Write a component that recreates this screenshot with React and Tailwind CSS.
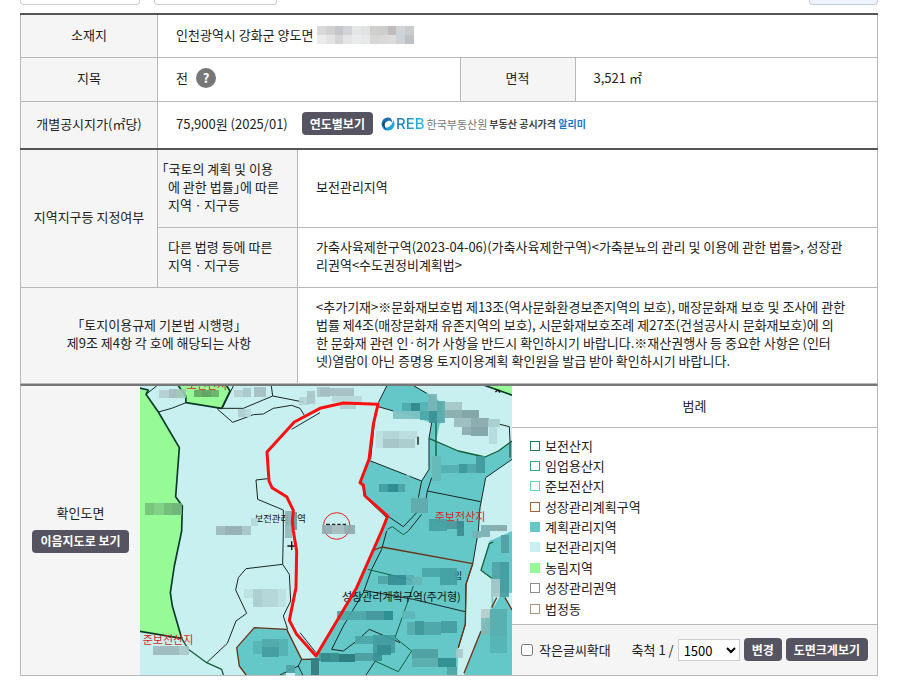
import React from "react";

const DARK_BUTTON =
  "h-[23px] rounded bg-[#565460] px-2 text-[12px] leading-[18px] font-bold text-white whitespace-nowrap";
const HEAD = "border border-[#b8b8b8] bg-[#f5f5f5] pb-0.5 font-normal";
const CELL = "border border-[#b8b8b8] bg-white px-[18px] pb-0.5 text-left";

const LEGEND = [
  ["보전산지", "border border-[#1f7a4d]"],
  ["임업용산지", "border border-[#35a877]"],
  ["준보전산지", "border border-[#5fd8a8]"],
  ["성장관리계획구역", "border border-[#a0633c]"],
  ["계획관리지역", "bg-[#64c8c8]"],
  ["보전관리지역", "bg-[#c8f0f0]"],
  ["농림지역", "bg-[#96fa96]"],
  ["성장관리권역", "border border-[#8c8c8c]"],
  ["법정동", "border border-[#a8977c]"],
];

const MASK = [
  ["#d9d9d9", "#d2d2d2", "#c5c7ca", "#d0d3d6", "#e4e6e8", "#e2e2e2", "#cfcfcb", "#cdcdcd", "#c1bbbb", "#ced4da", "#c9cbcd"],
  ["#ececec", "#e3e3e3", "#d5d5d8", "#e5e5e5", "#eaebec", "#e8e8e8", "#d6d6d4", "#d9d9dc", "#dcdcdc", "#cfd2d6", "#bfc2c5"],
];

function AddressMask() {
  return (
    <svg
      className="ml-1"
      width="97"
      height="18"
      viewBox="0 0 99 18"
      preserveAspectRatio="none"
      shapeRendering="crispEdges"
      aria-hidden="true"
    >
      {MASK.map((row, r) =>
        row.map((fill, c) => <rect key={`${r}-${c}`} x={c * 9} y={r * 9} width="9" height="9" fill={fill} />)
      )}
    </svg>
  );
}

function RebLogo() {
  return (
    <a href="#reb" className="flex items-center whitespace-nowrap">
      <svg width="14" height="14" viewBox="0 0 28 28" aria-hidden="true">
        <path d="M14 1A13 13 0 0 0 4 22C5 15 8 10 14 8C17 7 20 8 22 11C23 5 19 1 14 1Z" fill="#1d6fb0" />
        <path d="M24 6A13 13 0 0 1 12 27C6 27 3 23 3 19C7 22 13 22 17 19C21 16 24 11 24 6Z" fill="#1aa6d6" />
        <path d="M5 10C2 16 5 24 12 26C7 21 6 15 9 9Z" fill="#0b3f77" />
      </svg>
      <span className="ml-px bg-linear-to-r from-[#2377ae] to-[#1fc0ee] bg-clip-text font-[Inter,sans-serif] text-[15px] leading-[18px] font-medium text-transparent">
        REB
      </span>
      <span className="ml-0.5 text-[11px] leading-[18px] text-[#777]">한국부동산원</span>
      <span className="ml-0.5 text-[10px] leading-[18px] font-bold text-[#444]">
        부동산 공시가격 <span className="text-[#1677cf]">알리미</span>
      </span>
    </a>
  );
}

const MOSAIC = [
  // upper left
  [58, 12, 28, 25, "#b4cdd0"], [86, 10, 26, 25, "#a5b8bc"], [112, 10, 26, 27, "#9cc8b0"],
  [162, 12, 24, 22, "#64a864"], [186, 12, 26, 22, "#5c9c60"], [212, 12, 24, 22, "#67ad67"],
  [282, 12, 26, 22, "#b4d0d2"], [308, 6, 24, 28, "#aac6ca"], [342, 4, 36, 30, "#a4bcc0"],
  [476, 32, 30, 26, "#b4d4d6"], [500, 15, 26, 40, "#a8c4c8"], [530, 4, 40, 28, "#aac4c8"],
  [540, 6, 102, 24, "#a4bcc0"], [575, 30, 92, 18, "#b8d6d8"], [600, 48, 48, 20, "#b0cccc"],
  [294, 70, 20, 24, "#acccce"], [314, 68, 20, 26, "#b8d8da"],
  [15, 350, 28, 38, "#74c078"], [43, 350, 28, 38, "#80cc84"], [71, 350, 26, 38, "#72b878"], [97, 350, 30, 38, "#6cae78"],
  [334, 396, 20, 24, "#b4d8da"], [228, 420, 26, 27, "#9cb8bb"], [254, 420, 52, 27, "#91aab0"], [306, 420, 28, 27, "#a8c2c4"],
  [436, 376, 22, 44, "#8cb0b4"], [458, 378, 14, 54, "#69979c"], [434, 420, 22, 36, "#94b8ba"],
  // upper right
  [864, 25, 26, 50, "#78b4b4"], [786, 52, 26, 24, "#4fa9ab"], [812, 50, 28, 26, "#2f8489"], [840, 48, 24, 28, "#56b2b2"],
  [760, 76, 80, 24, "#7cc0c0"], [840, 76, 26, 26, "#4ba6a8"], [866, 76, 26, 36, "#398d91"], [892, 46, 24, 66, "#5aa8a8"],
  [916, 48, 50, 24, "#a4c4c4"], [916, 72, 50, 24, "#86a9aa"], [966, 72, 52, 24, "#7b9fa1"], [942, 96, 50, 26, "#9ababa"], [992, 96, 54, 28, "#87a5a8"],
  [966, 122, 26, 24, "#8ca9ac"], [992, 122, 52, 28, "#7d9da2"], [1044, 98, 36, 26, "#a8cccc"], [1048, 124, 24, 50, "#b4dada"],
  [708, 136, 22, 50, "#bce0e2"], [730, 134, 48, 26, "#b0d2d4"], [778, 136, 52, 24, "#b8dcde"], [730, 160, 48, 26, "#a2c1c4"], [778, 160, 48, 26, "#a9caca"],
  [876, 210, 26, 76, "#67b8b8"], [902, 236, 54, 24, "#55aeb0"], [956, 234, 26, 26, "#389699"], [982, 234, 26, 26, "#50a5a8"], [1008, 210, 26, 50, "#3e999c"],
  [717, 293, 28, 26, "#409c9e"], [745, 293, 28, 26, "#28878b"], [773, 293, 22, 26, "#4ba0a2"], [795, 268, 16, 24, "#72bcbc"],
  [812, 336, 52, 44, "#5faaad"], [868, 400, 54, 34, "#459fa1"], [922, 404, 50, 26, "#4c9799"], [950, 404, 22, 46, "#3b8d90"],
  [1022, 416, 28, 36, "#78adb0"], [1050, 416, 50, 18, "#82a6a9"],
  [545, 416, 32, 28, "#94aab0"], [577, 418, 34, 26, "#a6b9ba"], [611, 416, 34, 28, "#8eabae"],
  // lower left
  [313, 610, 26, 26, "#bcdfe0"], [339, 610, 28, 52, "#a8cbcc"], [367, 610, 46, 52, "#b3d4d6"], [413, 610, 26, 52, "#bce0e0"],
  [38, 780, 80, 26, "#9ab8bc"], [118, 780, 28, 26, "#a8c6c9"],
  [339, 766, 28, 38, "#58b4b4"], [367, 758, 50, 26, "#4fa6a8"], [367, 784, 50, 28, "#429b9f"], [417, 760, 28, 50, "#53b0b1"],
  [512, 817, 26, 50, "#33787b"], [538, 802, 32, 24, "#439396"], [438, 836, 28, 26, "#4fa3a5"],
  // lower right
  [997, 435, 26, 22, "#76b2b6"], [1082, 446, 24, 54, "#519fa2"], [1055, 528, 24, 52, "#50a4a5"], [1079, 528, 27, 106, "#429a9c"],
  [1053, 580, 26, 54, "#a7c7c8"], [1023, 670, 28, 26, "#b6cccb"], [1023, 696, 28, 52, "#80b8b8"], [1050, 670, 50, 80, "#57adae"], [1050, 750, 50, 50, "#54b4b5"],
  [715, 570, 28, 24, "#4da1a4"], [743, 568, 54, 28, "#338c91"], [797, 568, 24, 30, "#58afb0"],
  [845, 546, 54, 28, "#48a5a6"], [899, 546, 52, 50, "#439ea1"], [817, 572, 28, 26, "#64b6b8"],
  [590, 676, 88, 26, "#4ea5a6"], [678, 676, 54, 26, "#429599"], [732, 674, 26, 28, "#28898d"], [786, 674, 40, 26, "#5db6b8"],
  [800, 708, 24, 38, "#55abac"], [824, 706, 28, 40, "#3d9698"], [852, 708, 52, 40, "#4da4a6"], [904, 706, 46, 36, "#439ca0"],
  [646, 750, 54, 24, "#4ba5a7"], [700, 748, 66, 52, "#419a9d"], [712, 776, 40, 30, "#318d90"],
  [544, 802, 54, 26, "#36898b"], [598, 804, 48, 24, "#2a777b"], [646, 800, 52, 26, "#4d9c9f"], [698, 800, 28, 26, "#378e91"],
  [816, 790, 78, 26, "#4e9da0"], [816, 816, 78, 26, "#5aacac"], [894, 816, 54, 26, "#2e8b8c"], [920, 842, 30, 25, "#51a4a4"],
  [948, 790, 22, 26, "#a9c7c8"],
];

function ZoningMap() {
  return (
    <svg
      width="372"
      height="289"
      viewBox="0 0 1116 867"
      role="img"
      aria-label="확인도면"
      className="block overflow-visible font-['Noto_Sans_CJK_KR',sans-serif]"
    >
      <clipPath id="map-frame">
        <rect width="1116" height="867" />
      </clipPath>
      <g clipPath="url(#map-frame)" fill="none" strokeLinejoin="round">
        <rect width="1116" height="867" fill="#c8f0f0" />
        <g fill="#96fa96" stroke="#0c3a2a" strokeWidth="5">
          <path d="M-5 5L25 12L18 25L55 78L118 185L107 332L127 360L125 435L103 540L91 620L97 660L125 757L-5 735Z" />
          <path d="M112 -5L137 30L138 50L245 67L270 15L257 -5Z" />
          <path d="M1025 -5L1120 29V-5Z" />
        </g>
        <g fill="#64c8c8">
          <path d="M715 50L740 0H822L870 25L905 50L910 110L885 115L800 85L760 75L715 62Z" />
          <path d="M687 223L845 285L867 250V157L875 110H900L888 167L955 195L1035 213L1075 195L1116 165V220L1037 275L1020 365L1015 435L998 535L978 595L976 715L955 785L952 867H318L298 840L290 785L343 725L440 730L485 820L528 815L540 790L650 605L725 435L743 390L675 330L660 290Z" />
          <path d="M1048 465L1116 435V867H972L1023 735L1055 665V577L1023 553Z" />
          <path d="M1060 665L1080 630H1095L1116 670V665L1116 620H1060Z" fill="#c8f0f0" />
        </g>
        <g stroke="#1c2624" strokeWidth="3">
          <path d="M18 25L50 0M55 78L95 67L138 50M232 67H310L398 30L394 0M398 30L490 48M248 65L280 0" />
          <path d="M232 69L278 109L340 86L370 84L400 67L455 58L480 67L493 88" />
          <path d="M383 278L348 282L353 340L430 372V435L428 535L448 565L452 645L430 690L443 730" />
          <path d="M428 535L318 548L295 575L287 612L320 682L288 705L262 772L200 830" />
          <path d="M485 820L475 840L420 867M475 840L488 867" />
          <path d="M715 50L740 0M822 0L860 22M715 62L760 75M687 223L845 285L867 250V157L875 110M845 285L835 335M743 390L790 422L835 375" />
          <path d="M1080 115L1108 122L1110 165V215" />
          <path d="M862 315L1022 347M875 275L862 315L858 340M845 385L805 435" />
          <path d="M1116 220L1037 275L1020 365L1015 435L998 535L978 595L976 715L955 785" />
          <path d="M740 435L725 490L695 550L670 620L610 720L575 790L610 795L650 765L688 730L780 770" />
          <path d="M670 613L820 640L975 677M706 825L678 867M480 740L528 800" />
          <path d="M540 80L455 130M706 80L692 220M672 300V330L740 395" />
        </g>
        <g stroke="#116037" strokeWidth="4">
          <path d="M867 157L955 195L1035 213L1075 195L1116 165M888 110V210" />
          <path d="M125 757L145 790L200 830L245 850L250 867" />
          <path d="M742 430L757 422L790 446L804 436M683 550L815 582M820 600L765 755L815 795L775 857L705 825" strokeWidth="3" />
          <path d="M1060 468L1048 473L1023 553L1055 577" />
        </g>
        <g stroke="#6b3216" strokeWidth="4">
          <path d="M725 483L998 533L978 595L976 715L955 785M700 493L725 483" />
          <path d="M318 867L298 840L290 785L343 725L440 730L485 820H515" />
          <path d="M972 862L1023 735M1055 665L1070 635M1095 635L1116 672" />
        </g>
        <g fontSize="33">
          <text x="140" y="8" fill="#e01818">보전산지</text>
          <text x="344" y="408" fontSize="28" fill="#111">보전관리</text>
          <text x="472" y="408" fontSize="28" fill="#111">역</text>
          <text x="884" y="406" fill="#e01818">준보전산지</text>
          <text x="8" y="774" fill="#e01818">준보전산지</text>
          <text x="606" y="646" fill="#111">성장관리계획구역(주거형)</text>
          <text x="942" y="580" fontSize="26" fill="#111">임</text>
        </g>
        <path d="M834 152V176M442 480H466M455 466V492M1066 18L1074 12L1080 20" stroke="#111" strokeWidth="4" />
        <circle cx="590" cy="420" r="40" stroke="#e82020" strokeWidth="3" />
        <path d="M558 416H570M576 416H586M592 416H602M608 416H618" stroke="#222" strokeWidth="5" />
      </g>
      <g shapeRendering="crispEdges">
        {MOSAIC.map(([x, y, width, height, fill]) => (
          <rect key={`${x}-${y}`} x={x} y={y} width={width} height={height} fill={fill} opacity="0.9" />
        ))}
        <rect x="438" y="862" width="27" height="25" fill="#d4f0f0" />
      </g>
      <path
        d="M610 51L540 67L463 108L381 198L387 285L396 305L440 332L460 373L457 405L460 435L470 495L468 605L448 703L470 745L528 810L540 790L650 605L725 435L743 390L675 330L670 297L660 290L687 220L700 115L714 55Z"
        fill="none"
        stroke="#fa1010"
        strokeWidth="9"
        strokeLinejoin="round"
      />
    </svg>
  );
}

export default function App() {
  return (
    <div className="mr-[22px] ml-5 font-['Noto_Sans_CJK_KR',sans-serif] text-[13px] leading-[18px] text-[#222]">
      <div className="mb-2 flex gap-3.5">
        <button type="button" aria-label="이전" className="h-[5px] w-[120px] rounded-b border border-t-0 border-[#ccc]" />
        <button type="button" aria-label="다음" className="h-[5px] w-[123px] rounded-b border border-t-0 border-[#ccc]" />
        <button type="button" aria-label="인쇄" className="ml-auto h-[5px] w-[69px] rounded-b border border-t-0 border-[#c5ccd8] bg-[#eef4fd]" />
      </div>

      <table className="w-full table-fixed border-collapse border-t-2 border-b-2 border-[#555]">
        <colgroup>
          <col className="w-[137px]" />
          <col />
          <col className="w-[115px]" />
          <col />
        </colgroup>
        <tbody>
          <tr className="h-[43px]">
            <th scope="row" className={HEAD}>소재지</th>
            <td colSpan={3} className={CELL}>
              <div className="flex items-center">
                인천광역시 강화군 양도면
                <AddressMask />
              </div>
            </td>
          </tr>
          <tr className="h-11">
            <th scope="row" className={HEAD}>지목</th>
            <td className={CELL}>
              <div className="flex items-center gap-2">
                전
                <button type="button" className="size-5 rounded-full bg-[#777] text-[13px] leading-5 font-bold text-white">?</button>
              </div>
            </td>
            <th scope="row" className={HEAD}>면적</th>
            <td className={CELL}>3,521 ㎡</td>
          </tr>
          <tr className="h-12">
            <th scope="row" className={HEAD}>개별공시지가(㎡당)</th>
            <td colSpan={3} className={CELL}>
              <div className="flex items-center">
                75,900원 (2025/01)
                <button type="button" className={`${DARK_BUTTON} mr-2 ml-3.5`}>연도별보기</button>
                <RebLogo />
              </div>
            </td>
          </tr>
        </tbody>
      </table>

      <table className="w-full table-fixed border-collapse break-all">
        <colgroup>
          <col className="w-[137px]" />
          <col className="w-[140px]" />
          <col />
        </colgroup>
        <tbody>
          <tr className="h-[77px]">
            <th scope="rowgroup" rowSpan={2} className={`${HEAD} border-t-0`}>지역지구등 지정여부</th>
            <th
              scope="row"
              className={`${HEAD} border-t-0 pr-2 pl-[10px] text-left -indent-1.5 [font-feature-settings:'halt']`}
            >
              「국토의 계획 및 이용
              <br />
              에 관한 법률」에 따른
              <br />
              지역ㆍ지구등
            </th>
            <td className={`${CELL} border-t-0`}>보전관리지역</td>
          </tr>
          <tr className="h-[60px]">
            <th scope="row" className={`${HEAD} pr-2 pl-[10px] text-left`}>
              다른 법령 등에 따른
              <br />
              지역ㆍ지구등
            </th>
            <td className={CELL}>
              가축사육제한구역(2023-04-06)(가축사육제한구역)&lt;가축분뇨의 관리 및 이용에 관한 법률&gt;, 성장관
              <br />
              리권역&lt;수도권정비계획법&gt;
            </td>
          </tr>
          <tr className="h-24">
            <th scope="row" colSpan={2} className={HEAD}>
              「토지이용규제 기본법 시행령」
              <br />
              제9조 제4항 각 호에 해당되는 사항
            </th>
            <td className={CELL}>
              &lt;추가기재&gt;※문화재보호법 제13조(역사문화환경보존지역의 보호), 매장문화재 보호 및 조사에 관한
              <br />
              법률 제4조(매장문화재 유존지역의 보호), 시문화재보호조례 제27조(건설공사시 문화재보호)에 의
              <br />
              한 문화재 관련 인·허가 사항을 반드시 확인하시기 바랍니다.※재산권행사 등 중요한 사항은 (인터
              <br />
              넷)열람이 아닌 증명용 토지이용계획 확인원을 발급 받아 확인하시기 바랍니다.
            </td>
          </tr>
        </tbody>
      </table>

      <section className="flex border border-t-2 border-[#b8b8b8] border-t-[#777]">
        <div className="flex w-[119px] shrink-0 flex-col items-center justify-center gap-2 bg-[#f5f5f5] pb-1">
          <h2>확인도면</h2>
          <button type="button" className={DARK_BUTTON}>이음지도로 보기</button>
        </div>
        <div className="shrink-0">
          <ZoningMap />
        </div>
        <div className="flex min-w-0 grow flex-col">
          <h2 className="flex h-[42px] items-center justify-center border-b border-[#b8b8b8]">범례</h2>
          <ul className="flex grow flex-col justify-between pt-[9px] pb-1.5 pl-[18px]">
            {LEGEND.map(([name, swatch]) => (
              <li key={name} className="flex items-center gap-[5px]">
                <span className={`size-[10px] ${swatch}`} />
                {name}
              </li>
            ))}
          </ul>
          <form className="flex h-[51px] items-center border-t border-[#b8b8b8] bg-[#f5f5f5] px-[9px] whitespace-nowrap">
            <label className="flex items-center gap-1.5">
              <input type="checkbox" className="size-3" />
              작은글씨확대
            </label>
            <label htmlFor="scale" className="ml-auto">축척 1 /</label>
            <select
              id="scale"
              defaultValue="1500"
              className="ml-1 h-[22px] w-[62px] border border-[#ccc] bg-white pl-px text-[13px] leading-[18px] text-black"
            >
              <option>1500</option>
            </select>
            <button type="button" className={`${DARK_BUTTON} ml-1`}>변경</button>
            <button type="button" className={`${DARK_BUTTON} ml-1`}>도면크게보기</button>
          </form>
        </div>
      </section>
    </div>
  );
}
